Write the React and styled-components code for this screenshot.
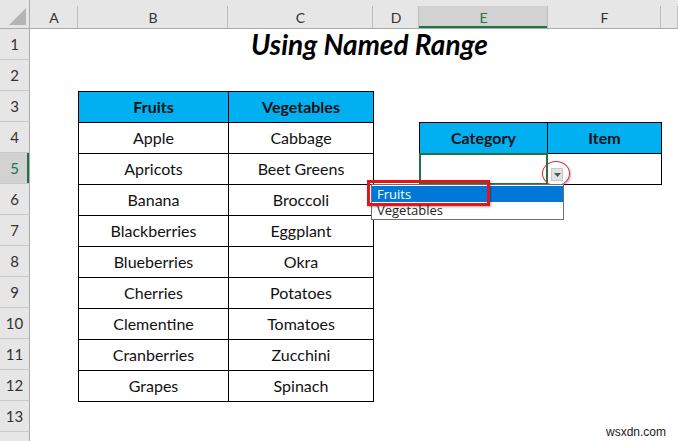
import React from 'react';
import styled, { createGlobalStyle } from 'styled-components';

const GlobalStyle = createGlobalStyle`
  html, body {
    margin: 0;
    padding: 0;
    background: #ffffff;
    overflow: hidden;
  }
  body {
    font-family: Lato, "Liberation Sans", sans-serif;
  }
`;

const Sheet = styled.div`
  position: relative;
  display: grid;
  grid-template-columns: 30px 48px 150px 145px 46px 129px 113px 1fr;
  grid-template-rows: 29px repeat(14, 31px);
  width: 678px;
  height: 441px;
  overflow: hidden;
  background: #ffffff;
`;

const Corner = styled.div`
  grid-column: 1;
  grid-row: 1;
  background: #e6e6e6;
  border-right: 1px solid #ababab;
  border-bottom: 1px solid #ababab;
  box-sizing: border-box;
  display: flex;
  align-items: flex-end;
  justify-content: flex-end;
  padding: 0 3px 3px 0;
`;

const ColHead = styled.div`
  grid-row: 1;
  position: relative;
  box-sizing: border-box;
  padding-top: 6px;
  display: flex;
  align-items: center;
  justify-content: center;
  font-size: 14px;
  color: ${p => (p.$selected ? '#217346' : '#333333')};
  background: ${p =>
    p.$selected
      ? 'linear-gradient(#e6e6e6 6px, #d2d2d2 6px)'
      : '#e6e6e6'};
  border-bottom: 1px solid #ababab;
  box-shadow: ${p => (p.$selected ? 'inset 0 -2px 0 #217346' : 'none')};

  &::after {
    content: '';
    position: absolute;
    top: 6px;
    right: 0;
    bottom: 0;
    width: 1px;
    background: #bdbdbd;
  }
`;

const RowHead = styled.div`
  grid-column: 1;
  box-sizing: border-box;
  display: flex;
  align-items: center;
  justify-content: center;
  font-size: 15px;
  color: ${p => (p.$selected ? '#217346' : '#333333')};
  background: ${p => (p.$selected ? '#d2d2d2' : '#e6e6e6')};
  border-right: 1px solid #ababab;
  border-bottom: 1px solid #c8c8c8;
  box-shadow: ${p => (p.$selected ? 'inset -2px 0 0 #217346' : 'none')};
`;

const Title = styled.h1`
  grid-column: 3 / 8;
  grid-row: 2;
  margin: 0;
  align-self: center;
  text-align: center;
  font-size: 28px;
  line-height: 31px;
  font-weight: 700;
  font-style: italic;
  color: #000000;
`;

const DataTable = styled.div`
  grid-column: ${p => p.$cols};
  grid-row: ${p => p.$rows};
  position: relative;
  z-index: ${p => p.$layer || 1};
  width: calc(100% + 1px);
  height: calc(100% + 1px);
  box-sizing: border-box;
  display: grid;
  grid-template-columns: ${p => p.$template};
  grid-auto-rows: 1fr;
  gap: 1px;
  padding: 1px;
  background: #000000;
`;

const Cell = styled.div`
  position: relative;
  display: flex;
  align-items: center;
  justify-content: center;
  padding-bottom: 2px;
  box-sizing: border-box;
  font-size: 16px;
  font-weight: ${p => (p.$head ? 700 : 400)};
  color: #111111;
  background: ${p => (p.$head ? '#00b0f0' : '#ffffff')};
  outline: ${p => (p.$active ? '2px solid #217346' : 'none')};
  outline-offset: -1px;
  z-index: ${p => (p.$active ? 2 : 'auto')};
`;

const DropButton = styled.div`
  position: absolute;
  left: calc(100% + 4px);
  top: 14px;
  width: 12px;
  height: 13px;
  box-sizing: border-box;
  background: #e1e1e1;
  border: 1px solid #c8c8c8;
  display: flex;
  align-items: center;
  justify-content: center;
`;

const Ring = styled.div`
  position: absolute;
  left: 122px;
  top: 7px;
  width: 28px;
  height: 25px;
  box-sizing: border-box;
  border: 1.5px solid #e0262c;
  border-radius: 50%;
  box-shadow: 1px 1px 2px rgba(0, 0, 0, 0.3);
`;

const DropList = styled.div`
  position: absolute;
  left: -49px;
  top: 100%;
  width: 193px;
  box-sizing: border-box;
  padding: 1px 0;
  background: #ffffff;
  border: 1px solid #6e6e6e;
  font-family: "Open Sans", "Noto Sans", sans-serif;
  font-size: 13px;
`;

const Option = styled.div`
  position: relative;
  height: 16px;
  line-height: 16px;
  padding-left: 5px;
  color: ${p => (p.$hover ? '#ffffff' : '#222222')};
  background: ${p => (p.$hover ? '#0078d7' : 'transparent')};
`;

const Highlight = styled.div`
  position: absolute;
  left: -5px;
  top: -6px;
  width: 123px;
  height: 26px;
  box-sizing: border-box;
  border: 3px solid #e3151b;
  box-shadow: 1px 1px 2px rgba(0, 0, 0, 0.35);
`;

const Watermark = styled.div`
  position: absolute;
  right: 12px;
  bottom: 2px;
  font-family: "Liberation Sans", Arial, sans-serif;
  font-size: 12px;
  color: #222222;
`;

const columns = ['A', 'B', 'C', 'D', 'E', 'F', ''];
const rows = Array.from({ length: 14 }, (_, i) => i + 1);

const produce = [
  ['Apple', 'Cabbage'],
  ['Apricots', 'Beet Greens'],
  ['Banana', 'Broccoli'],
  ['Blackberries', 'Eggplant'],
  ['Blueberries', 'Okra'],
  ['Cherries', 'Potatoes'],
  ['Clementine', 'Tomatoes'],
  ['Cranberries', 'Zucchini'],
  ['Grapes', 'Spinach'],
];

export default function App() {
  return (
    <>
      <GlobalStyle />
      <Sheet>
        <Corner>
          <svg width="17" height="17" viewBox="0 0 17 17">
            <polygon points="17,0 17,17 0,17" fill="#b5b5b5" />
          </svg>
        </Corner>
        {columns.map((c, i) => (
          <ColHead key={i} style={{ gridColumn: i + 2 }} $selected={c === 'E'}>
            {c}
          </ColHead>
        ))}
        {rows.map(r => (
          <RowHead key={r} style={{ gridRow: r + 1 }} $selected={r === 5}>
            {r}
          </RowHead>
        ))}

        <Title>Using Named Range</Title>

        <DataTable $cols="3 / 5" $rows="4 / 14" $template="149px 1fr">
          <Cell $head>Fruits</Cell>
          <Cell $head>Vegetables</Cell>
          {produce.map(([fruit, veg]) => (
            <React.Fragment key={fruit}>
              <Cell>{fruit}</Cell>
              <Cell>{veg}</Cell>
            </React.Fragment>
          ))}
        </DataTable>

        <DataTable $cols="6 / 8" $rows="5 / 7" $template="127px 1fr" $layer={3}>
          <Cell $head>Category</Cell>
          <Cell $head>Item</Cell>
          <Cell $active>
            <DropButton>
              <svg width="7" height="4" viewBox="0 0 7 4">
                <polygon points="0,0 7,0 3.5,4" fill="#555555" />
              </svg>
            </DropButton>
            <Ring />
            <DropList>
              <Option $hover>
                Fruits
                <Highlight />
              </Option>
              <Option>Vegetables</Option>
            </DropList>
          </Cell>
          <Cell />
        </DataTable>

        <Watermark>wsxdn.com</Watermark>
      </Sheet>
    </>
  );
}
